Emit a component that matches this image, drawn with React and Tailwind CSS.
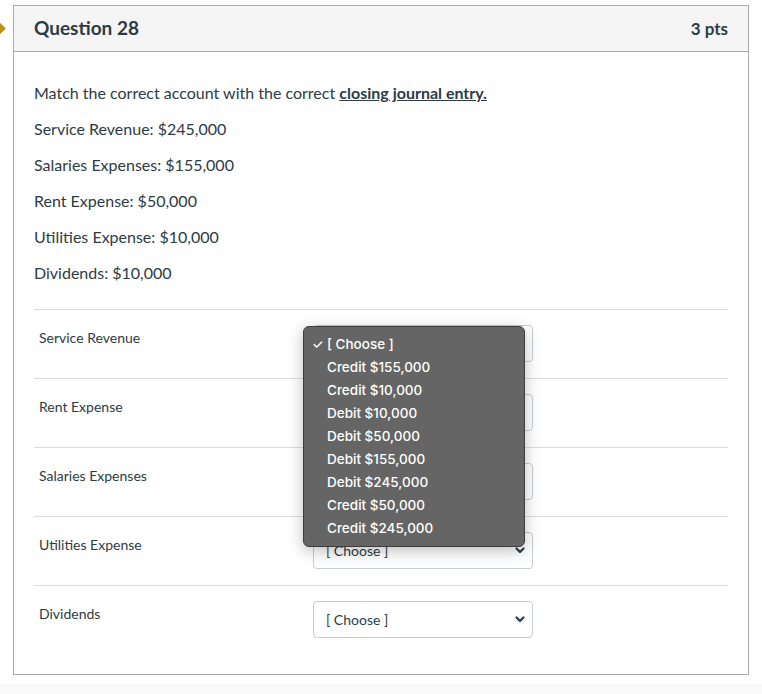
import React from 'react'

const facts = [
  'Service Revenue: $245,000',
  'Salaries Expenses: $155,000',
  'Rent Expense: $50,000',
  'Utilities Expense: $10,000',
  'Dividends: $10,000',
]

const rows = ['Service Revenue', 'Rent Expense', 'Salaries Expenses', 'Utilities Expense', 'Dividends']

const options = [
  'Credit $155,000',
  'Credit $10,000',
  'Debit $10,000',
  'Debit $50,000',
  'Debit $155,000',
  'Debit $245,000',
  'Credit $50,000',
  'Credit $245,000',
]

function Chevron() {
  return (
    <svg width="10" height="7" viewBox="0 0 10 7" className="shrink-0">
      <path d="M1.5 1.5 L5 5 L8.5 1.5" fill="none" stroke="#2d3b45" strokeWidth="2.2" strokeLinecap="round" strokeLinejoin="round" />
    </svg>
  )
}

function FakeSelect() {
  return (
    <div className="mt-[15px] flex h-[37px] w-[220px] items-center justify-between rounded-[4px] border border-[#c7cdd1] bg-white pl-[12px] pr-[7px] text-[14px] text-[#2d3b45]">
      <span>[ Choose ]</span>
      <Chevron />
    </div>
  )
}

export default function App() {
  return (
    <div className="relative h-[694px] w-full overflow-hidden bg-white font-['Lato',sans-serif] text-[#2d3b45]">
      <div className="absolute left-[-5px] top-[24px] h-[9px] w-[9px] rotate-45 bg-[#c09012]" />

      <div className="ml-[13px] mt-[5px] w-[736px] border border-[#aaaaaa]">
        <div className="flex h-[46px] items-center justify-between border-b border-[#aaaaaa] bg-[#f5f5f5] px-[20px]">
          <h2 className="text-[19px] font-bold">Question 28</h2>
          <span className="text-[17px] font-bold text-[#2d3b45]">3 pts</span>
        </div>

        <div className="px-[20px] pb-[20px] pt-[31px]">
          <div className="text-[16px] leading-[20px]">
            <p className="mb-[16px]">
              Match the correct account with the correct{' '}
              <span className="font-bold underline">closing journal entry.</span>
            </p>
            {facts.map((f) => (
              <p key={f} className="mb-[16px]">{f}</p>
            ))}
          </div>

          <div className="mt-[26px]">
            {rows.map((r) => (
              <div key={r} className="flex h-[69px] border-t border-[#dddddd]">
                <div className="w-[279px] pl-[5px] pt-[18px] text-[14px] leading-[20px]">{r}</div>
                <FakeSelect />
              </div>
            ))}
          </div>
        </div>
      </div>

      <div className="absolute bottom-0 left-0 h-[10px] w-full bg-[#fafafa]" />

      <div className="absolute left-[303px] top-[326px] w-[222px] rounded-[6px] border border-[#3c3c3c] bg-[#646564] py-[6px] font-['Inter',sans-serif] text-[13.5px] font-medium text-white shadow-[0_4px_16px_rgba(0,0,0,0.25)]">
        <div className="flex h-[23px] items-center">
          <span className="w-[23px] pl-[8px] text-[13px]">✓</span>
          <span>[ Choose ]</span>
        </div>
        {options.map((o) => (
          <div key={o} className="flex h-[23px] items-center pl-[23px]">
            {o}
          </div>
        ))}
      </div>
    </div>
  )
}
